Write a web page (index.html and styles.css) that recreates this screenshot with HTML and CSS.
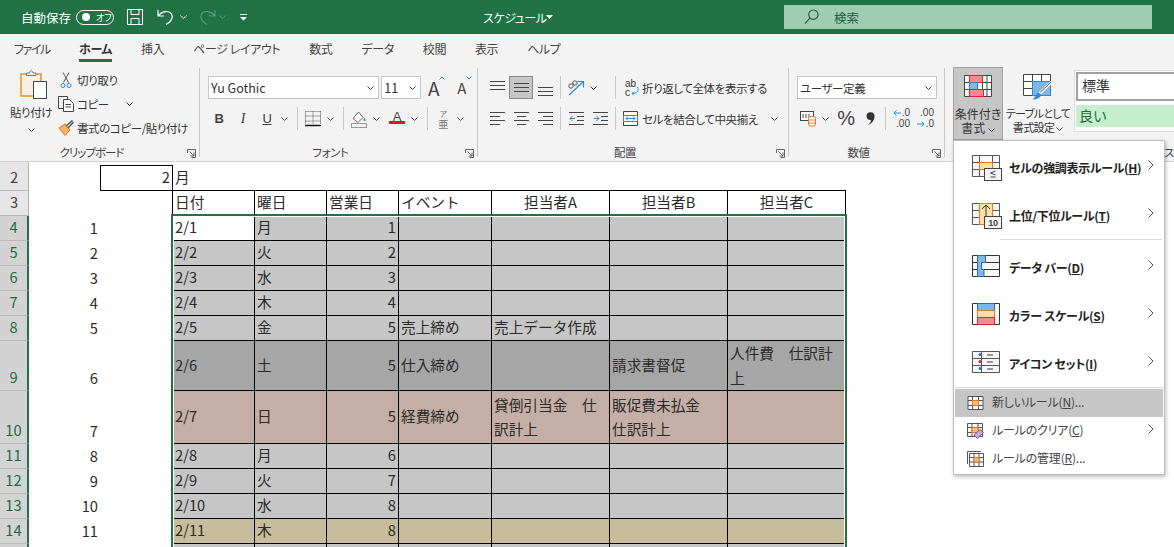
FILE: index.html
```html
<!DOCTYPE html>
<html lang="ja">
<head>
    <meta charset="UTF-8">
    <title>スケジュール - Excel</title>
    <link rel="stylesheet" href="styles.css">
</head>
<body>
    <svg class="defs" width="0" height="0">
        <symbol id="chev" viewBox="0 0 7 4"><path d="M.5.5 3.500 3.500 6.500.5" fill="none" stroke="currentColor"/></symbol>
        <symbol id="launch" viewBox="0 0 9 9"><path d="M.5 4V.5H8.500V8.500H4.500M2.500 2.500 7 7M7 3.500V7H3.500" fill="none" stroke="#666"/></symbol>
        <symbol id="right" viewBox="0 0 6 10"><path d="M.5.5 5 5 .5 9.500" fill="none" stroke="#555"/></symbol>
    </svg>

    <header class="titlebar">
        <span class="autosave">自動保存</span>
        <span class="toggle"><i class="toggle-dot"></i><span class="toggle-text">オフ</span></span>
        <svg class="t-save" width="16" height="16" viewBox="0 0 16 16"><path d="M.5.5H15.500V15.500H.5ZM4 .5V5.500H12V.5M4 15.500V9.500H12V15.500" fill="none" stroke="#fff"/></svg>
        <svg class="t-undo" width="20" height="18" viewBox="0 0 20 18"><path d="M1 2V8H7M1.500 7.500C5 3 12 2 14.500 6 16.500 9.500 14 14 9 16.500" fill="none" stroke="#fff" stroke-width="1.200"/></svg>
        <svg class="t-chev" width="7" height="4"><use href="#chev" color="#fff"/></svg>
        <svg class="t-redo" width="20" height="18" viewBox="0 0 20 18"><path d="M19 2V8H13M18.500 7.500C15 3 8 2 5.500 6 3.500 9.500 6 14 11 16.500" fill="none" stroke="#5c9a7b" stroke-width="1.200"/></svg>
        <svg class="t-chev t-dim" width="7" height="4"><use href="#chev" color="#5c9a7b"/></svg>
        <svg class="t-custom" width="9" height="7" viewBox="0 0 9 7"><path d="M1 .5H8" stroke="#fff" fill="none"/><path d="M1 3H8L4.500 6.500Z" fill="#fff"/></svg>
        <span class="doc-title">スケジュール</span>
        <svg class="doc-caret" width="7" height="4" viewBox="0 0 7 4"><path d="M0 0H7L3.500 4Z" fill="#fff"/></svg>
        <div class="search">
            <svg width="15" height="16" viewBox="0 0 16 17"><circle cx="10" cy="6" r="5" fill="none" stroke="#1d5c3d" stroke-width="1.200"/><path d="M6.500 9.500 1 15.500" stroke="#1d5c3d" stroke-width="1.200"/></svg>
            <span>検索</span>
        </div>
    </header>

    <nav class="tabs">
        <span class="tab-file">ファイル</span>
        <span class="tab-active">ホーム</span>
        <span>挿入</span>
        <span>ページ レイアウト</span>
        <span>数式</span>
        <span>データ</span>
        <span>校閲</span>
        <span>表示</span>
        <span>ヘルプ</span>
    </nav>

    <section class="ribbon">
        <div class="group g-clip">
            <div class="clip-body">
                <div class="paste">
                    <svg class="paste-icon" width="28" height="30" viewBox="0 0 28 30">
                        <rect x="1" y="4" width="20" height="22" fill="#f6efe4" stroke="#e8912d" stroke-width="1.500"/>
                        <path d="M6.500 5.500V3H9.500C10 0 12.500 0 13 3H16V5.500Z" fill="#f3f3f3" stroke="#777"/>
                        <rect x="13.500" y="11.500" width="13" height="17" fill="#fff" stroke="#444"/>
                    </svg>
                    <span>貼り付け</span>
                    <svg class="chev" width="7" height="4"><use href="#chev"/></svg>
                </div>
                <div class="clip-rows">
                    <div class="clip-row">
                        <svg width="12" height="17" viewBox="0 0 12 17"><path d="M3 .5 8.500 10.500M9 .5 3.500 10.500" stroke="#555" fill="none"/><circle cx="3" cy="13.500" r="2" fill="none" stroke="#2b88d8"/><circle cx="9" cy="13.500" r="2" fill="none" stroke="#2b88d8"/></svg>
                        <span>切り取り</span>
                    </div>
                    <div class="clip-row">
                        <svg width="16" height="16" viewBox="0 0 16 16"><path d="M5.500 12.500H.5V.5H9.500V3" fill="none" stroke="#444"/><path d="M5.500 3.500H11.500L15.500 7.500V15.500H5.500ZM7.500 8.500H13M7.500 11H13" fill="#fff" stroke="#444"/></svg>
                        <span>コピー</span>
                        <svg class="chev clip-chev" width="7" height="4"><use href="#chev"/></svg>
                    </div>
                    <div class="clip-row">
                        <svg class="brush" width="16" height="16" viewBox="0 0 16 16"><path d="M1 8 7 4 12 10 7 15.500Z" fill="#f3b463" stroke="#d9771b"/><path d="M8 6 14.500 .5M10 8 15.500 2" stroke="#555" stroke-width="1.500"/></svg>
                        <span>書式のコピー/貼り付け</span>
                    </div>
                </div>
            </div>
            <div class="group-label">クリップボード<svg class="launch" width="9" height="9"><use href="#launch"/></svg></div>
        </div>

        <div class="group g-font">
            <div class="tool-rows">
                <div class="row">
                    <div class="select s-font">Yu Gothic<svg class="chev" width="7" height="4"><use href="#chev"/></svg></div>
                    <div class="select s-size">11<svg class="chev" width="7" height="4"><use href="#chev"/></svg></div>
                    <span class="grow">A<svg width="6" height="4" viewBox="0 0 6 4"><path d="M.5 3.500 3 1 5.500 3.500" fill="none" stroke="#2b88d8"/></svg></span>
                    <span class="grow grow-small">A<svg width="6" height="4" viewBox="0 0 6 4"><path d="M.5.5 3 3 5.500.5" fill="none" stroke="#2b88d8"/></svg></span>
                </div>
                <div class="row row-shift">
                    <span class="tb tb-bold">B</span>
                    <span class="tb tb-italic">I</span>
                    <span class="tb tb-under">U</span>
                    <span class="cv"><svg width="7" height="4"><use href="#chev"/></svg></span>
                    <i class="sep"></i>
                    <span class="tb"><svg width="16" height="16" viewBox="0 0 16 16"><path d="M.5.500H15.500M.5 5H15.500M.5 10H15.500M.5.5V13M8 .5V13M15.500 .5V13" stroke="#555" stroke-dasharray="1 1" fill="none"/><path d="M0 14.500H16" stroke="#111" stroke-width="1.500"/></svg></span>
                    <span class="cv"><svg width="7" height="4"><use href="#chev"/></svg></span>
                    <i class="sep"></i>
                    <span class="tb"><svg width="16" height="18" viewBox="0 0 16 18"><path d="M2 8.500 7.500 2 12 7.500 7 12.500Z" fill="#fff" stroke="#666"/><path d="M13.500 8c1.500 1.500 1.500 3 0 3s-1.500-1.500 0-3Z" fill="#2b88d8"/><rect x=".5" y="13.500" width="15" height="4" fill="#f3f3f3" stroke="#999"/></svg></span>
                    <span class="cv"><svg width="7" height="4"><use href="#chev"/></svg></span>
                    <span class="tb tb-gap tb-color">A</span>
                    <span class="cv"><svg width="7" height="4"><use href="#chev"/></svg></span>
                    <i class="sep"></i>
                    <span class="tb tb-furi"><small>ア</small><span>亜</span></span>
                    <span class="cv"><svg width="7" height="4"><use href="#chev"/></svg></span>
                </div>
            </div>
            <div class="group-label">フォント<svg class="launch" width="9" height="9"><use href="#launch"/></svg></div>
        </div>

        <div class="group g-align">
            <div class="tool-rows">
                <div class="row row-shift">
                    <span class="tb"><svg width="15" height="14" viewBox="0 0 15 14"><path d="M0 .5H15M0 4.500H15" stroke="#444" fill="none"/><path d="M0 8.500H15" stroke="#444"/></svg></span>
                    <span class="tb tb-on"><svg width="15" height="14" viewBox="0 0 15 14"><path d="M0 2.500H15M0 6.500H15M0 10.500H15" stroke="#444" fill="none"/></svg></span>
                    <span class="tb"><svg class="al-bottom" width="15" height="14" viewBox="0 0 15 14"><path d="M0 5.500H15M0 9.500H15M0 13.500H15" stroke="#444" fill="none"/></svg></span>
                    <i class="sep"></i>
                    <span class="tb"><svg width="18" height="16" viewBox="0 0 18 16"><path d="M2 15 16 2M10.500 1.500H16.500V7.500" fill="none" stroke="#2b88d8" stroke-width="1.200"/><circle cx="4" cy="6" r="2.200" fill="none" stroke="#555"/><circle cx="8" cy="3" r="2.200" fill="none" stroke="#555"/></svg></span>
                    <span class="cv"><svg width="7" height="4"><use href="#chev"/></svg></span>
                    <i class="sep sep-far"></i>
                    <span class="wide wide-wrap">
                        <span class="wrap-icon">ab<br>c<svg width="8" height="9" viewBox="0 0 8 9"><path d="M6.500 0C8 3 7 6.500 1 6.500M3 4.500 1 6.500 3 8.500" fill="none" stroke="#2b88d8"/></svg></span>
                        <span>折り返して全体を表示する</span>
                    </span>
                </div>
                <div class="row row-shift">
                    <span class="tb"><svg width="15" height="14" viewBox="0 0 15 14"><path d="M0 .5H15M0 4.500H10M0 8.500H15M0 12.500H10" stroke="#444" fill="none"/></svg></span>
                    <span class="tb"><svg width="15" height="14" viewBox="0 0 15 14"><path d="M0 .5H15M3 4.500H12M0 8.500H15M3 12.500H12" stroke="#444" fill="none"/></svg></span>
                    <span class="tb"><svg width="15" height="14" viewBox="0 0 15 14"><path d="M0 .5H15M5 4.500H15M0 8.500H15M5 12.500H15" stroke="#444" fill="none"/></svg></span>
                    <i class="sep"></i>
                    <span class="tb"><svg width="15" height="14" viewBox="0 0 15 14"><path d="M0 .5H15M8 4.500H15M8 8.500H15M0 12.500H15" stroke="#444" fill="none"/><path d="M6 6.500H1M3.500 4 1 6.500 3.500 9" stroke="#2b88d8" fill="none"/></svg></span>
                    <span class="tb"><svg width="15" height="14" viewBox="0 0 15 14"><path d="M0 .5H15M8 4.500H15M8 8.500H15M0 12.500H15" stroke="#444" fill="none"/><path d="M1 6.500H6M3.500 4 6 6.500 3.500 9" stroke="#2b88d8" fill="none"/></svg></span>
                    <i class="sep"></i>
                    <span class="wide wide-merge">
                        <svg width="15" height="15" viewBox="0 0 15 15"><path d="M.5.5H14.500V14.500H.5Z" fill="#fff" stroke="#444"/><path d="M.5 4.500H14.500V10.500H.5Z" fill="#fff" stroke="#2b88d8"/><path d="M3 7.500H12M5 5.500 3 7.500 5 9.500M10 5.500 12 7.500 10 9.500" fill="none" stroke="#2b88d8"/></svg>
                        <span>セルを結合して中央揃え</span>
                        <svg class="chev wide-chev" width="7" height="4"><use href="#chev"/></svg>
                    </span>
                </div>
            </div>
            <div class="group-label">配置<svg class="launch" width="9" height="9"><use href="#launch"/></svg></div>
        </div>

        <div class="group g-num">
            <div class="tool-rows">
                <div class="row">
                    <div class="select s-num">ユーザー定義<svg class="chev" width="7" height="4"><use href="#chev"/></svg></div>
                </div>
                <div class="row row-shift">
                    <span class="tb"><svg width="17" height="17" viewBox="0 0 17 17"><rect x=".5" y="1.500" width="13" height="9" fill="#fff" stroke="#444"/><path d="M3 4V8M6 4V8M9 4V8" stroke="#444"/><rect x="8.500" y="6.500" width="7" height="9.500" rx="2" fill="#fff" stroke="#e8772e"/><path d="M9 10H15M9 13H15" stroke="#e8772e"/></svg></span>
                    <span class="cv"><svg width="7" height="4"><use href="#chev"/></svg></span>
                    <span class="tb tb-gap tb-pct">%</span>
                    <span class="tb"><svg width="9" height="13" viewBox="0 0 9 13"><path d="M.5 4A4 4 0 1 1 8.500 4.500C8.500 8 6 11.500 2 13 3.800 11.500 4.800 10 5 8 2.500 8.500 .5 6.500 .5 4Z" fill="#333"/></svg></span>
                    <i class="sep"></i>
                    <span class="tb dec">
                        <svg width="8" height="6" viewBox="0 0 8 6"><path d="M8 3H1M3.500.5 1 3 3.500 5.500" stroke="#2b88d8" fill="none"/></svg><b class="d1">.0</b><b class="d2">.00</b>
                    </span>
                    <span class="tb dec">
                        <b class="d3">.00</b><svg width="8" height="6" viewBox="0 0 8 6"><path d="M0 3H7M4.500.5 7 3 4.500 5.500" stroke="#2b88d8" fill="none"/></svg><b class="d4">.0</b>
                    </span>
                </div>
            </div>
            <div class="group-label">数値<svg class="launch" width="9" height="9"><use href="#launch"/></svg></div>
        </div>

        <div class="group g-style">
            <div class="style-body">
                <div class="big big-on">
                    <svg width="28" height="22" viewBox="0 0 28 22">
                        <path d="M.5.5H27.500V21.500H.5ZM.5 7.500H27.500M.5 14.500H27.500M5.500.5V21.500M18.500.5V21.500M23 .5V21.500" fill="#fff" stroke="#444"/>
                        <rect x="5.500" y=".5" width="13" height="7" fill="#f58a92" stroke="#d9252c"/>
                        <rect x="5.500" y="7.500" width="8" height="7" fill="#7fb6e6" stroke="#2b88d8"/>
                        <rect x="5.500" y="14.500" width="14" height="7" fill="#f58a92" stroke="#d9252c"/>
                    </svg>
                    <span>条件付き<br>書式 <svg class="chev" width="7" height="4"><use href="#chev"/></svg></span>
                </div>
                <div class="big big-table">
                    <svg width="30" height="26" viewBox="0 0 30 26">
                        <path d="M.5.5H27.500V21.500H.5ZM.5 7.500H27.500M.5 14.500H27.500M9.500.5V21.500M18.500.5V21.500" fill="#fff" stroke="#444"/>
                        <rect x="9.500" y="7.500" width="18" height="14" fill="#7fb6e6" stroke="#2b88d8"/>
                        <path d="M28.500 8 16 20" stroke="#fff" stroke-width="3"/>
                        <path d="M28 8 17 18.500" stroke="#555" stroke-width="1"/>
                        <path d="M9 25.500C12 25.500 12 20 15.500 18.500L18.500 21C17 24 13 26 9 25.500Z" fill="#2b88d8"/>
                    </svg>
                    <span>テーブルとして<br>書式設定 <svg class="chev" width="7" height="4"><use href="#chev"/></svg></span>
                </div>
                <div class="gallery">
                    <div class="gal-normal">標準</div>
                    <div class="gal-good">良い</div>
                </div>
            </div>
            <div class="group-label style-label">スタイル</div>
        </div>
    </section>

    <main class="sheet">
        <table class="grid">
            <colgroup>
                <col class="c-head"><col class="c-a"><col class="c-b"><col class="c-c"><col class="c-d"><col class="c-e">
                <col class="c-f"><col class="c-g"><col class="c-h"><col class="c-i">
            </colgroup>
            <tr class="r-sliver"><th></th><td colspan="9"></td></tr>
            <tr class="r-2">
                <th>2</th><td></td><td class="num boxed">2</td>
                <td class="under">月</td><td class="under"></td><td class="under"></td><td class="under"></td><td class="under"></td><td class="under"></td><td class="under"></td>
            </tr>
            <tr class="r-3">
                <th>3</th><td></td><td class="edge"></td>
                <td class="line">日付</td><td class="line">曜日</td><td class="line">営業日</td><td class="line">イベント</td>
                <td class="line mid">担当者A</td><td class="line mid">担当者B</td><td class="line mid">担当者C</td>
            </tr>
            <tr class="day active">
                <th>4</th><td class="num">1</td><td></td>
                <td class="line first">2/1</td><td class="line">月</td><td class="line num">1</td><td class="line"></td><td class="line"></td><td class="line"></td><td class="line"></td>
            </tr>
            <tr class="day">
                <th>5</th><td class="num">2</td><td></td>
                <td class="line">2/2</td><td class="line">火</td><td class="line num">2</td><td class="line"></td><td class="line"></td><td class="line"></td><td class="line"></td>
            </tr>
            <tr class="day">
                <th>6</th><td class="num">3</td><td></td>
                <td class="line">2/3</td><td class="line">水</td><td class="line num">3</td><td class="line"></td><td class="line"></td><td class="line"></td><td class="line"></td>
            </tr>
            <tr class="day">
                <th>7</th><td class="num">4</td><td></td>
                <td class="line">2/4</td><td class="line">木</td><td class="line num">4</td><td class="line"></td><td class="line"></td><td class="line"></td><td class="line"></td>
            </tr>
            <tr class="day">
                <th>8</th><td class="num">5</td><td></td>
                <td class="line">2/5</td><td class="line">金</td><td class="line num">5</td><td class="line">売上締め</td><td class="line">売上データ作成</td><td class="line"></td><td class="line"></td>
            </tr>
            <tr class="day sat">
                <th>9</th><td class="num">6</td><td></td>
                <td class="line">2/6</td><td class="line">土</td><td class="line num">5</td><td class="line">仕入締め</td><td class="line"></td><td class="line">請求書督促</td><td class="line wrap">人件費　仕訳計上</td>
            </tr>
            <tr class="day sun">
                <th>10</th><td class="num">7</td><td></td>
                <td class="line">2/7</td><td class="line">日</td><td class="line num">5</td><td class="line">経費締め</td><td class="line wrap">貸倒引当金　仕訳計上</td><td class="line wrap">販促費未払金<br>仕訳計上</td><td class="line"></td>
            </tr>
            <tr class="day">
                <th>11</th><td class="num">8</td><td></td>
                <td class="line">2/8</td><td class="line">月</td><td class="line num">6</td><td class="line"></td><td class="line"></td><td class="line"></td><td class="line"></td>
            </tr>
            <tr class="day">
                <th>12</th><td class="num">9</td><td></td>
                <td class="line">2/9</td><td class="line">火</td><td class="line num">7</td><td class="line"></td><td class="line"></td><td class="line"></td><td class="line"></td>
            </tr>
            <tr class="day">
                <th>13</th><td class="num">10</td><td></td>
                <td class="line">2/10</td><td class="line">水</td><td class="line num">8</td><td class="line"></td><td class="line"></td><td class="line"></td><td class="line"></td>
            </tr>
            <tr class="day holiday">
                <th>14</th><td class="num">11</td><td></td>
                <td class="line">2/11</td><td class="line">木</td><td class="line num">8</td><td class="line"></td><td class="line"></td><td class="line"></td><td class="line"></td>
            </tr>
            <tr class="day">
                <th></th><td></td><td></td>
                <td class="line"></td><td class="line"></td><td class="line"></td><td class="line"></td><td class="line"></td><td class="line"></td><td class="line"></td>
            </tr>
        </table>
        <div class="selection"></div>
    </main>

    <div class="menu">
        <div class="item">
            <svg class="item-icon" width="30" height="26" viewBox="0 0 30 26">
                <path d="M.5.5H27.500V21.500H.5ZM.5 7.500H27.500M.5 14.500H27.500M7.500.5V21.500M20.500.5V21.500" fill="#f8f8f8" stroke="#555"/>
                <rect x="7.500" y="7.500" width="13" height="7" fill="#fde0a5" stroke="#e8772e"/>
                <rect x="12.500" y="13.500" width="17" height="12" fill="#f3f3f3" stroke="#444"/>
                <path d="M23.500 16 18.500 18 23.500 20M18.500 22H23.500" fill="none" stroke="#444"/>
            </svg>
            <span>セルの強調表示ルール(<u>H</u>)</span>
            <svg class="go" width="6" height="10"><use href="#right"/></svg>
        </div>
        <div class="item">
            <svg class="item-icon" width="30" height="26" viewBox="0 0 30 26">
                <path d="M.5.5H27.500V21.500H.5ZM.5 7.500H27.500M.5 14.500H27.500M7.500.5V21.500M20.500.5V21.500" fill="#f8f8f8" stroke="#555"/>
                <rect x="7.500" y=".5" width="13" height="21" fill="#fde0a5" stroke="#e8772e"/>
                <path d="M14 13V2M10 6 14 2 18 6" fill="none" stroke="#333"/>
                <rect x="12.500" y="13.500" width="17" height="12" fill="#f3f3f3" stroke="#444"/>
                <text x="21" y="23" class="icon-ten">10</text>
            </svg>
            <span>上位/下位ルール(<u>T</u>)</span>
            <svg class="go" width="6" height="10"><use href="#right"/></svg>
        </div>
        <hr class="rule rule-short">
        <div class="item">
            <svg class="item-icon" width="30" height="26" viewBox="0 0 30 26">
                <path d="M.5.5H27.500V21.500H.5ZM.5 7.500H27.500M.5 14.500H27.500M7.500.5V21.500" fill="#f8f8f8" stroke="#333"/>
                <path d="M5.500.5H13.500V7.500H9.500V14.500H12V21.500H5.500Z" fill="#7fb6e6" stroke="#2470b3"/>
            </svg>
            <span>データ バー(<u>D</u>)</span>
            <svg class="go" width="6" height="10"><use href="#right"/></svg>
        </div>
        <div class="item">
            <svg class="item-icon" width="30" height="26" viewBox="0 0 30 26">
                <path d="M.5.5H27.500V21.500H.5ZM7.500.5V21.500M20.500.5V21.500" fill="#f8f8f8" stroke="#333"/>
                <rect x="5.500" y=".5" width="17" height="7" fill="#7fb6e6" stroke="#2470b3"/>
                <rect x="5.500" y="7.500" width="17" height="7" fill="#fde0a5" stroke="#e8772e"/>
                <rect x="5.500" y="14.500" width="17" height="7" fill="#f58a92" stroke="#d9252c"/>
            </svg>
            <span>カラー スケール(<u>S</u>)</span>
            <svg class="go" width="6" height="10"><use href="#right"/></svg>
        </div>
        <div class="item">
            <svg class="item-icon" width="30" height="26" viewBox="0 0 30 26">
                <path d="M.5.5H27.500V21.500H.5ZM.5 7.500H27.500M.5 14.500H27.500M9.500.5V21.500" fill="#f8f8f8" stroke="#555"/>
                <path d="M15 4H21M15 11H21M15 18H21" stroke="#333"/>
                <circle cx="8" cy="3.500" r="1.500" fill="#1e78c8"/>
                <circle cx="8" cy="10.500" r="1.500" fill="#d9252c"/>
                <circle cx="8" cy="17.500" r="1.500" fill="#1e78c8"/>
            </svg>
            <span>アイコン セット(<u>I</u>)</span>
            <svg class="go" width="6" height="10"><use href="#right"/></svg>
        </div>
        <hr class="rule">
        <div class="item item-small item-hover">
            <svg width="16" height="14" viewBox="0 0 16 14"><path d="M.5.5H15.500V13.500H.5ZM.5 4.500H15.500M.5 9.500H15.500M5 .5V13.500M11 .5V13.500" fill="#fff" stroke="#555"/><rect x="5" y="4.500" width="6" height="5" fill="#fbc063" stroke="#e8772e"/></svg>
            <span>新しいルール(<u>N</u>)...</span>
        </div>
        <div class="item item-small">
            <svg width="17" height="16" viewBox="0 0 17 16"><path d="M.5.5H15.500V13.500H.5ZM.5 4.500H15.500M.5 9.500H15.500M5 .5V13.500M11 .5V13.500" fill="#fff" stroke="#555"/><rect x="5" y="4.500" width="6" height="5" fill="#fbc063" stroke="#e8772e"/><path d="M7 12 13 6.500 16.500 9.500 10.500 15.500Z" fill="#c9a7d8" stroke="#8b4fa8"/></svg>
            <span>ルールのクリア(<u>C</u>)</span>
            <svg class="go" width="6" height="10"><use href="#right"/></svg>
        </div>
        <div class="item item-small">
            <svg width="17" height="16" viewBox="0 0 17 16"><path d="M.5 13V.5H14" fill="none" stroke="#555"/><path d="M2.500 2.500H16.500V15.500H2.500ZM2.500 6.500H16.500M2.500 11H16.500M7 2.500V15.500M12 2.500V15.500" fill="#fff" stroke="#555"/><rect x="7" y="6.500" width="5" height="4.500" fill="#fbc063" stroke="#e8772e"/></svg>
            <span>ルールの管理(<u>R</u>)...</span>
        </div>
    </div>
</body>
</html>
```

FILE: styles.css
```css
* {
    box-sizing: border-box;
}
html, body {
    margin: 0;
    height: 547px;
    overflow: hidden;
}
body {
    position: relative;
    background: #fff;
    color: #333;
    font-family: "Noto Sans CJK JP", "Noto Sans", sans-serif;
    font-size: 12px;
    font-feature-settings: "palt";
}
svg {
    display: block;
    flex: none;
}
.defs {
    position: absolute;
}

/* title bar */
.titlebar {
    height: 34px;
    background: #217346;
    color: #fff;
    display: flex;
    align-items: center;
    padding-left: 21px;
}
.autosave {
    font-size: 12.500px;
    width: 55px;
}
.toggle {
    width: 38px;
    height: 15px;
    border: 1px solid #fff;
    border-radius: 8px;
    display: flex;
    align-items: center;
    padding-left: 5px;
}
.toggle-dot {
    width: 8px;
    height: 8px;
    border-radius: 50%;
    background: #fff;
}
.toggle-text {
    font-size: 9px;
    margin-left: 6px;
}
.t-save {
    margin-left: 13px;
}
.t-undo {
    margin-left: 14px;
}
.t-chev {
    margin-left: 3px;
}
.t-redo {
    margin-left: 9px;
}
.t-custom {
    margin-left: 13px;
}
.doc-title {
    font-size: 12px;
    letter-spacing: -0.4px;
    margin-left: 235px;
    width: 57px;
    white-space: nowrap;
}
.doc-caret {
    margin-left: 6px;
}
.search {
    width: 368px;
    height: 24px;
    margin-left: 231px;
    background: #9fcdb3;
    color: #1d5c3d;
    display: flex;
    align-items: center;
    padding-left: 20px;
    gap: 15px;
    font-size: 12.500px;
}

/* tabs */
.tabs {
    height: 31px;
    background: #f3f3f3;
    display: flex;
    gap: 29px;
    padding-left: 14px;
    font-size: 12px;
    letter-spacing: -0.4px;
    line-height: 30px;
    color: #444;
}
.tabs span {
    white-space: nowrap;
}
.tabs .tab-file {
    letter-spacing: -1.400px;
}
.tab-active {
    height: 28px;
    font-weight: 700;
    color: #333;
    border-bottom: 3px solid #217346;
}

/* ribbon */
.ribbon {
    height: 97px;
    background: #f3f3f3;
    border-bottom: 1px solid #d2d0ce;
    display: flex;
    padding-top: 3px;
    overflow: hidden;
    font-size: 11.500px;
    letter-spacing: -0.4px;
}
.group {
    height: 89px;
    border-right: 1px solid #c8c8c8;
    display: flex;
    flex-direction: column;
    flex: none;
    position: relative;
}
.g-clip {
    width: 200px;
}
.g-font {
    width: 278px;
    padding-left: 8px;
}
.g-align {
    width: 311px;
    padding-left: 8px;
}
.g-num {
    width: 156px;
    padding-left: 8px;
}
.g-style {
    width: 229px;
    padding-left: 8px;
    border-right: none;
}
.group-label {
    margin-top: auto;
    margin-bottom: -3px;
    padding-right: 16px;
    height: 16px;
    line-height: 16px;
    text-align: center;
    color: #444;
}
.g-clip .group-label {
    letter-spacing: -1px;
}
.g-font .group-label, .g-align .group-label, .g-num .group-label {
    margin-left: -8px;
}
.launch {
    position: absolute;
    right: 3px;
    bottom: -1px;
}
.style-label {
    text-align: left;
    margin-left: 211px;
    padding-right: 0;
    white-space: nowrap;
}

/* clipboard */
.clip-body {
    display: flex;
    height: 72px;
}
.paste {
    width: 48px;
    margin-left: 7px;
    display: flex;
    flex-direction: column;
    align-items: center;
    padding-top: 2px;
    line-height: 16px;
}
.paste-icon {
    margin-left: 5px;
}
.paste span {
    margin-top: 4px;
    white-space: nowrap;
}
.paste .chev {
    margin-top: 8px;
}
.clip-rows {
    padding-left: 1px;
}
.clip-row {
    height: 24px;
    display: flex;
    align-items: center;
    gap: 3px;
    white-space: nowrap;
    padding-left: 2px;
}
.clip-row:first-child svg {
    margin: 0 2px;
}
.clip-chev {
    margin-left: 14px;
}

/* tool rows */
.tool-rows {
    padding-top: 8px;
    display: flex;
    flex-direction: column;
    gap: 8px;
}
.row {
    height: 23px;
    display: flex;
    align-items: center;
}
.row-shift {
    margin-left: -1px;
}
.select {
    height: 23px;
    background: #fff;
    border: 1px solid #c6c6c6;
    display: flex;
    align-items: center;
    justify-content: space-between;
    padding: 0 4px 0 2px;
    font-size: 12.500px;
    letter-spacing: 0;
    color: #333;
}
.s-font {
    width: 172px;
}
.s-size {
    width: 40px;
    margin-left: 2px;
}
.s-num {
    width: 140px;
    font-size: 11.500px;
    letter-spacing: -0.4px;
}
.grow {
    width: 25px;
    margin-left: 3px;
    display: flex;
    justify-content: center;
    font-size: 19px;
    line-height: 23px;
    color: #444;
}
.grow-small {
    font-size: 15px;
}
.tb {
    width: 24px;
    height: 23px;
    flex: none;
    display: flex;
    align-items: center;
    justify-content: center;
    font-size: 13px;
    color: #444;
}
.tb-gap {
    margin-left: 3px;
}
.tb-on {
    background: #c6c6c6;
    border: 1px solid #8a8a8a;
}
.tb-bold {
    font-family: "Liberation Sans", sans-serif;
    font-weight: 700;
}
.tb-italic {
    font-family: "Liberation Serif", serif;
    font-style: italic;
    font-size: 14px;
}
.tb-under {
    font-family: "Liberation Sans", sans-serif;
    text-decoration: underline;
}
.tb-color {
    font-family: "Liberation Sans", sans-serif;
    border-bottom: 4px solid transparent;
    background: linear-gradient(#e81123, #e81123) center bottom / 16px 3px no-repeat;
    padding-bottom: 1px;
    height: 19px;
    align-self: flex-end;
    margin-bottom: 2px;
}
.tb-furi {
    flex-direction: column;
    color: #777;
}
.tb-furi small {
    font-size: 8px;
    line-height: 9px;
}
.tb-furi span {
    font-size: 10px;
    line-height: 11px;
}
.tb-pct {
    font-size: 20px;
    font-family: "Liberation Sans", sans-serif;
}
.dec {
    display: grid;
    grid-template-columns: 8px 1fr;
    align-items: center;
    font-family: "Liberation Sans", sans-serif;
    font-size: 10px;
    line-height: 10px;
    letter-spacing: 0;
    padding: 0 3px 0 4px;
}
.dec b {
    font-weight: 400;
    text-align: right;
}
.d2, .d3 {
    grid-column: 1 / 3;
}
.cv {
    width: 11px;
    flex: none;
    display: flex;
    justify-content: center;
    color: #444;
}
.chev {
    color: #444;
}
.sep {
    width: 1px;
    height: 23px;
    flex: none;
    background: #c8c8c8;
    margin: 0 3px 0 7px;
}
.tb + .sep {
    margin-left: 3px;
}
.cv + .sep-far {
    margin-left: 16px;
}
.wide {
    display: flex;
    align-items: center;
    white-space: nowrap;
}
.wide-wrap {
    margin-left: 6px;
}
.wide-merge {
    margin-left: 4px;
    gap: 4px;
}
.wide-chev {
    margin-left: 9px;
}
.wrap-icon {
    position: relative;
    width: 17px;
    font-size: 10px;
    line-height: 9px;
    letter-spacing: 0;
    font-family: "Liberation Sans", sans-serif;
}
.wrap-icon svg {
    position: absolute;
    left: 6px;
    top: 8px;
}
.al-bottom {
    margin-top: 2px;
}

/* styles */
.style-body {
    display: flex;
    margin-top: -1px;
    height: 73px;
    line-height: 14px;
    text-align: center;
}
.big {
    flex: none;
    display: flex;
    flex-direction: column;
    align-items: center;
    padding-top: 7px;
}
.big span {
    white-space: nowrap;
    margin-top: 10px;
}
.big span svg {
    display: inline-block;
    vertical-align: middle;
}
.big-on {
    width: 50px;
    background: #c6c6c6;
    border: 1px solid #a0a0a0;
    font-size: 12px;
    letter-spacing: 0;
}
.big-table {
    width: 67px;
    padding-left: 3px;
    font-size: 11px;
    letter-spacing: -0.6px;
}
.big-table span {
    margin-top: 6px;
}
.gallery {
    flex: none;
    width: 104px;
    height: 62px;
    margin: 3px 0 0 4px;
    background: #fff;
    border: 1px solid #dcdcdc;
    padding: 1px;
    text-align: left;
    font-size: 14px;
    letter-spacing: 0;
    font-feature-settings: normal;
}
.gal-normal {
    height: 29px;
    border: 2px solid #a0a0a0;
    background: #fff;
    padding-left: 4px;
    line-height: 23px;
}
.gal-good {
    height: 22px;
    margin-top: 4px;
    background: #c6efce;
    color: #1e6b3a;
    padding-left: 3px;
    line-height: 20px;
}

/* sheet */
.sheet {
    position: relative;
}
.grid {
    border-collapse: separate;
    border-spacing: 0;
    table-layout: fixed;
    width: 846px;
    font-size: 14.670px;
    line-height: 22px;
    color: #2b2b2b;
    font-feature-settings: normal;
}
.c-head { width: 29px; }
.c-a { width: 71px; }
.c-b { width: 73px; }
.c-c { width: 82px; }
.c-d { width: 72px; }
.c-e { width: 72px; }
.c-f { width: 93px; }
.c-g { width: 118px; }
.c-h { width: 118px; }
.c-i { width: 118px; }
.grid th {
    height: 25px;
    padding: 0 0 2px;
    font-weight: 400;
    font-size: 14.670px;
    line-height: 22px;
    vertical-align: bottom;
    background: #e6e6e6;
    color: #444;
    border-right: 1px solid #b0b0b0;
    border-bottom: 1px solid #b8b8b8;
    text-align: center;
}
.grid td {
    height: 25px;
    padding: 0 2px 2px;
    vertical-align: middle;
    overflow: hidden;
}
.grid td.wrap {
    line-height: 24.500px;
    padding-bottom: 0;
}
.grid .r-sliver th, .grid .r-sliver td {
    height: 3px;
    padding: 0;
    line-height: 0;
}
.grid .r-sliver th {
    border-bottom: none;
}
.r-2 th, .r-2 td {
    height: 26px;
}
.boxed {
    border: 1px solid #000;
}
.under {
    border-bottom: 1px solid #000;
}
.edge {
    border-right: 1px solid #000;
}
.line {
    border-right: 1px solid #000;
    border-bottom: 1px solid #000;
}
.mid {
    text-align: center;
}
.num {
    text-align: right;
}
.day th {
    background: #d3d3d3;
    color: #1d6b41;
    border-right: 2px solid #217346;
}
.day td.line {
    background: #c6c6c6;
}
.day td:nth-child(2) {
    vertical-align: bottom;
}
.sat th, .sat td {
    height: 50px;
}
.sat td.line {
    background: #a6a6a6;
}
.sun th, .sun td {
    height: 53px;
}
.sun td.line {
    background: #c4aea5;
}
.holiday td.line {
    background: #c7bc9b;
}
.day td.first {
    background: #fff;
}
.selection {
    position: absolute;
    left: 171px;
    top: 52px;
    width: 676px;
    height: 360px;
    border: 2px solid #217346;
    box-shadow: inset 0 0 0 1px #fff;
    pointer-events: none;
}

/* conditional format menu */
.menu {
    position: absolute;
    left: 953px;
    top: 140px;
    width: 212px;
    height: 335px;
    background: #fff;
    border: 1px solid #bdbdbd;
    box-shadow: 1px 2px 4px rgba(0, 0, 0, 0.25);
    padding: 2px 1px;
    z-index: 5;
}
.item {
    height: 48px;
    display: flex;
    align-items: center;
    padding-left: 17px;
    font-weight: 700;
    font-size: 12px;
    letter-spacing: -0.3px;
    color: #222;
    white-space: nowrap;
    position: relative;
}
.item-icon {
    margin-right: 7px;
    margin-top: 1px;
}
.go {
    position: absolute;
    right: 9px;
    top: 50%;
    margin-top: -7px;
}
.icon-ten {
    font-family: "Liberation Sans", sans-serif;
    font-size: 9px;
    text-anchor: middle;
    fill: #444;
}
.rule {
    border: none;
    height: 1px;
    background: #dcdcdc;
    margin: 0;
}
.rule-short {
    margin: 0 1px 3px 45px;
}
.item-small {
    height: 28px;
    padding-left: 12px;
    font-weight: 400;
    letter-spacing: -0.2px;
    color: #444;
}
.item-small span {
    padding-bottom: 3px;
}
.item-small > svg:first-child {
    width: 17px;
    margin-right: 8px;
}
.item-hover {
    margin-top: 1px;
    background: #c6c6c6;
}
```
